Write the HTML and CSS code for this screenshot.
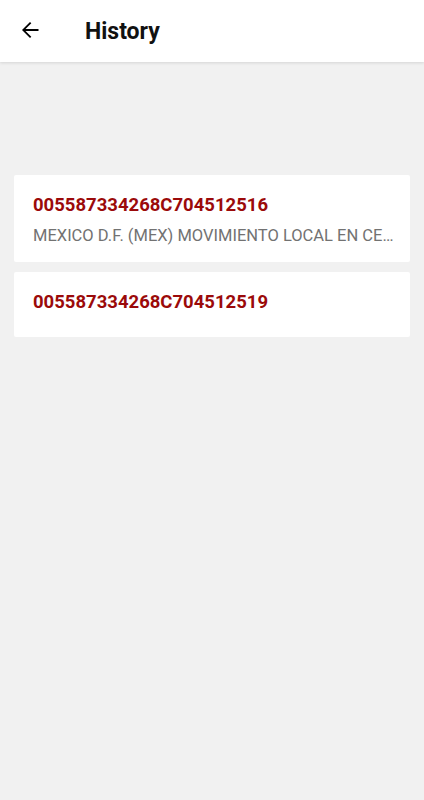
FILE: index.html
```html
<!DOCTYPE html>
<html>
<head>
<meta charset="utf-8">
<link rel="stylesheet" href="styles.css">
</head>
<body>
<header class="appbar">
  <button class="back" aria-label="Back">
    <svg width="24" height="24" viewBox="0 0 24 24"><path d="M20.5 11.1H7.5l5.8-5.8-1.3-1.3-8 8 8 8 1.3-1.3-5.8-5.8h13z" fill="#000"/></svg>
  </button>
  <h1 class="title">History</h1>
</header>
<main class="list">
  <div class="card">
    <div class="code">005587334268C704512516</div>
    <div class="desc">MEXICO D.F. (MEX) MOVIMIENTO LOCAL EN CE…</div>
  </div>
  <div class="card card-short">
    <div class="code">005587334268C704512519</div>
  </div>
</main>
</body>
</html>
```
FILE: styles.css
```css
* { box-sizing: border-box; }
html, body { margin: 0; padding: 0; }
body {
  background: #f1f1f1;
  font-family: Roboto, "Noto Sans", sans-serif;
  min-height: 800px;
}
.appbar {
  height: 62px;
  background: #fff;
  display: flex;
  align-items: center;
  box-shadow: 0 1px 3px rgba(0,0,0,0.12);
  position: relative;
}
.back {
  border: 0;
  background: none;
  padding: 0;
  margin-left: 18px;
  width: 24px;
  height: 24px;
  display: flex;
  margin-top: -2px;
}
.title {
  margin: 0 0 0 43px;
  font-size: 23px;
  font-weight: 700;
  color: #111;
  margin-top: 0;
}
.list {
  padding: 113px 14px 0;
  display: flex;
  flex-direction: column;
  gap: 10px;
}
.card {
  background: #fff;
  border-radius: 2px;
  padding: 18px 19px 0;
  height: 87px;
}
.card-short { height: 65px; }
.code {
  color: #9b0a0a;
  font-weight: 700;
  font-size: 18.5px;
  line-height: 24px;
}
.desc {
  color: #727272;
  font-size: 16.5px;
  line-height: 20px;
  margin-top: 9px;
  white-space: nowrap;
}
```
